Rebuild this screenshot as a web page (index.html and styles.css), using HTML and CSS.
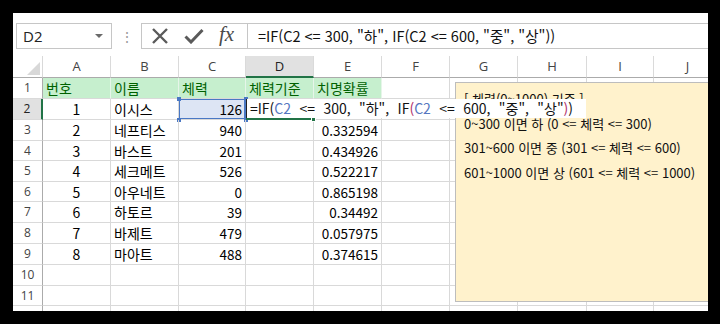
FILE: index.html
```html
<!DOCTYPE html>
<html lang="ko">
<head>
<meta charset="utf-8">
<title>Excel IF</title>
<link rel="stylesheet" href="styles.css">
</head>
<body>
<div class="frame">
  <div class="toolbar">
    <div class="namebox"><span class="nb-text">D2</span><span class="nb-arrow"></span></div>
    <div class="dots">⋮</div>
    <div class="fxbox">
      <svg class="ico-x" width="18" height="16" viewBox="0 0 18 16"><path d="M2 1 L16 15 M16 1 L2 15" stroke="#5a5a5a" stroke-width="2.4" fill="none"/></svg>
      <svg class="ico-ok" width="20" height="16" viewBox="0 0 20 16"><path d="M1.5 8.5 L7 14 L18.5 2" stroke="#5a5a5a" stroke-width="3" fill="none"/></svg>
      <span class="ico-fx">fx</span>
    </div>
    <div class="formula">=IF(C2 &lt;= 300, "하", IF(C2 &lt;= 600, "중", "상"))</div>
  </div>

  <div class="sheet">
    <div class="corner"><span class="tri"></span></div>
    <div class="ch">A</div><div class="ch">B</div><div class="ch">C</div><div class="ch ch-on">D</div><div class="ch">E</div><div class="ch">F</div><div class="ch">G</div><div class="ch">H</div><div class="ch">I</div><div class="ch">J</div>

    <div class="rh">1</div>
    <div class="c hd">번호</div><div class="c hd">이름</div><div class="c hd">체력</div><div class="c hd">체력기준</div><div class="c hd">치명확률</div><div class="c"></div><div class="c"></div><div class="c"></div><div class="c"></div><div class="c"></div>

    <div class="rh rh-on">2</div>
    <div class="c ctr">1</div><div class="c">이시스</div><div class="c num ref">126<i class="h h1"></i><i class="h h2"></i><i class="h h3"></i><i class="h h4"></i></div><div class="c act"></div><div class="c num"></div><div class="c"></div><div class="c"></div><div class="c"></div><div class="c"></div><div class="c"></div>

    <div class="rh">3</div>
    <div class="c ctr">2</div><div class="c">네프티스</div><div class="c num">940</div><div class="c"></div><div class="c num">0.332594</div><div class="c"></div><div class="c"></div><div class="c"></div><div class="c"></div><div class="c"></div>

    <div class="rh">4</div>
    <div class="c ctr">3</div><div class="c">바스트</div><div class="c num">201</div><div class="c"></div><div class="c num">0.434926</div><div class="c"></div><div class="c"></div><div class="c"></div><div class="c"></div><div class="c"></div>

    <div class="rh">5</div>
    <div class="c ctr">4</div><div class="c">세크메트</div><div class="c num">526</div><div class="c"></div><div class="c num">0.522217</div><div class="c"></div><div class="c"></div><div class="c"></div><div class="c"></div><div class="c"></div>

    <div class="rh">6</div>
    <div class="c ctr">5</div><div class="c">아우네트</div><div class="c num">0</div><div class="c"></div><div class="c num">0.865198</div><div class="c"></div><div class="c"></div><div class="c"></div><div class="c"></div><div class="c"></div>

    <div class="rh">7</div>
    <div class="c ctr">6</div><div class="c">하토르</div><div class="c num">39</div><div class="c"></div><div class="c num">0.34492</div><div class="c"></div><div class="c"></div><div class="c"></div><div class="c"></div><div class="c"></div>

    <div class="rh">8</div>
    <div class="c ctr">7</div><div class="c">바제트</div><div class="c num">479</div><div class="c"></div><div class="c num">0.057975</div><div class="c"></div><div class="c"></div><div class="c"></div><div class="c"></div><div class="c"></div>

    <div class="rh">9</div>
    <div class="c ctr">8</div><div class="c">마아트</div><div class="c num">488</div><div class="c"></div><div class="c num">0.374615</div><div class="c"></div><div class="c"></div><div class="c"></div><div class="c"></div><div class="c"></div>

    <div class="rh">10</div>
    <div class="c"></div><div class="c"></div><div class="c"></div><div class="c"></div><div class="c"></div><div class="c"></div><div class="c"></div><div class="c"></div><div class="c"></div><div class="c"></div>

    <div class="rh">11</div>
    <div class="c"></div><div class="c"></div><div class="c"></div><div class="c"></div><div class="c"></div><div class="c"></div><div class="c"></div><div class="c"></div><div class="c"></div><div class="c"></div>

    <div class="rh"></div>
    <div class="c"></div><div class="c"></div><div class="c"></div><div class="c"></div><div class="c"></div><div class="c"></div><div class="c"></div><div class="c"></div><div class="c"></div><div class="c"></div>
  </div>

  <div class="note">
    <p>[ 체력(0~1000) 기준 ]</p>
    <p>0~300 이면 하 (0 &lt;= 체력 &lt;= 300)</p>
    <p>301~600 이면 중 (301 &lt;= 체력 &lt;= 600)</p>
    <p>601~1000 이면 상 (601 &lt;= 체력 &lt;= 1000)</p>
  </div>

  <div class="editor">=IF(<span class="r1">C2</span> &lt;= 300, "하", IF<span class="p2">(</span><span class="r1">C2</span> &lt;= 600, "중", "상"<span class="p2">)</span>)</div>
  <i class="acthandle"></i>
</div>
</body>
</html>
```

FILE: styles.css
```css
* { box-sizing: border-box; }
html, body { margin: 0; padding: 0; background: #000; }
body { width: 720px; height: 324px; overflow: hidden; }

.frame {
  position: relative;
  margin: 13px 0 0 13px;
  width: 695px;
  height: 298px;
  background: #fff;
  overflow: hidden;
  font-family: "Noto Sans CJK KR", "Noto Sans", sans-serif;
  color: #000;
}

/* ---------- formula toolbar ---------- */
.toolbar {
  height: 43px;
  padding-top: 10px;
  display: flex;
  align-items: flex-start;
}
.namebox {
  margin-left: 3px;
  width: 96px;
  height: 26px;
  border: 1px solid #c6c6c6;
  display: flex;
  align-items: center;
  justify-content: space-between;
  padding: 0 8px 0 6px;
}
.nb-text { font-family: "Open Sans", "Noto Sans", sans-serif; font-size: 15px; color: #222; }
.nb-arrow {
  width: 0; height: 0;
  border-left: 4px solid transparent;
  border-right: 4px solid transparent;
  border-top: 4px solid #6a6a6a;
}
.dots {
  width: 29px;
  height: 26px;
  text-align: center;
  line-height: 26px;
  font-size: 14px;
  color: #9a9a9a;
}
.fxbox {
  width: 106px;
  height: 26px;
  border: 1px solid #c6c6c6;
  border-right: none;
  display: flex;
  align-items: center;
  padding-left: 9px;
}
.ico-x { margin-right: 15px; }
.ico-ok { margin-right: 15px; }
.ico-fx {
  font-family: "Liberation Serif", "DejaVu Serif", serif;
  font-style: italic;
  font-size: 21px;
  color: #4a4a4a;
  line-height: 1;
  margin-top: -3px;
}
.formula {
  flex: 1;
  height: 26px;
  border: 1px solid #c6c6c6;
  border-right: none;
  padding-left: 10px;
  font-size: 14.5px;
  line-height: 24px;
  white-space: nowrap;
  color: #111;
}

/* ---------- grid ---------- */
.sheet {
  display: grid;
  grid-template-columns: 30px 68px 68px 67px 68px 68px 68px 68px 69px 67px 68px;
  grid-template-rows: 22px 21px 21px 21px 20px 21px 20px 21px 21px 21px 21px 20px 21px;
}
.corner {
  position: relative;
  border-right: 1px solid #d9d9d9;
  border-bottom: 1px solid #ababab;
}
.tri {
  position: absolute;
  right: 2px;
  bottom: 2px;
  width: 0; height: 0;
  border-left: 13px solid transparent;
  border-bottom: 13px solid #d8d8d8;
}
.ch {
  border-right: 1px solid #dadada;
  border-bottom: 1px solid #ababab;
  text-align: center;
  font-family: "Open Sans", "Noto Sans", sans-serif;
  font-size: 13px;
  line-height: 21px;
  color: #444;
}
.ch-on {
  background: #e1e1e1;
  border-bottom: 2px solid #217346;
  color: #222;
}
.rh {
  border-right: 1px solid #ababab;
  border-bottom: 1px solid #dadada;
  text-align: center;
  font-family: "Open Sans", "Noto Sans", sans-serif;
  font-size: 12px;
  line-height: 20px;
  color: #444;
}
.rh-on {
  background: #e1e1e1;
  border-right: 2px solid #217346;
  color: #222;
}
.c {
  position: relative;
  border-right: 1px solid #d9d9d9;
  border-bottom: 1px solid #d9d9d9;
  padding: 0 3px;
  font-size: 14px;
  line-height: 20px;
  white-space: nowrap;
}
.hd {
  background: #c6efce;
  color: #006100;
  border-right-color: #e6f5e9;
  border-bottom-color: #d9d9d9;
}
.ctr { text-align: center; }
.num { text-align: right; font-size: 13.5px; }
.ref {
  background: #dde5f4;
  box-shadow: inset 0 0 0 1px #4a78c4;
  border-right-color: #4a78c4;
}
.h {
  position: absolute;
  width: 4px;
  height: 4px;
  background: #4a78c4;
}
.h1 { left: -2px; top: -2px; }
.h2 { right: -3px; top: -2px; }
.h3 { left: -2px; bottom: -3px; }
.h4 { right: -3px; bottom: -3px; }
.act { border-bottom: 2px solid #217346; }

/* ---------- note shape ---------- */
.note {
  position: absolute;
  left: 442px;
  top: 69px;
  width: 270px;
  height: 220px;
  background: #fff2cc;
  border: 1px solid #bdbdbd;
  padding: 4px 0 0 8px;
  font-size: 13px;
  color: #111;
}
.note p {
  margin: 0;
  line-height: 24.5px;
  white-space: nowrap;
}

/* ---------- in-cell editor ---------- */
.editor {
  position: absolute;
  left: 233px;
  top: 86px;
  width: 340px;
  height: 19px;
  background: #fff;
  border-left: 1px solid #222;
  padding-left: 3px;
  font-size: 14px;
  line-height: 19px;
  white-space: nowrap;
  word-spacing: 4.5px;
  color: #111;
}
.r1 { color: #5577c0; }
.p2 { color: #b0306c; }
.acthandle {
  position: absolute;
  left: 298px;
  top: 104px;
  width: 5px;
  height: 5px;
  background: #217346;
  border: 1px solid #fff;
}
```
